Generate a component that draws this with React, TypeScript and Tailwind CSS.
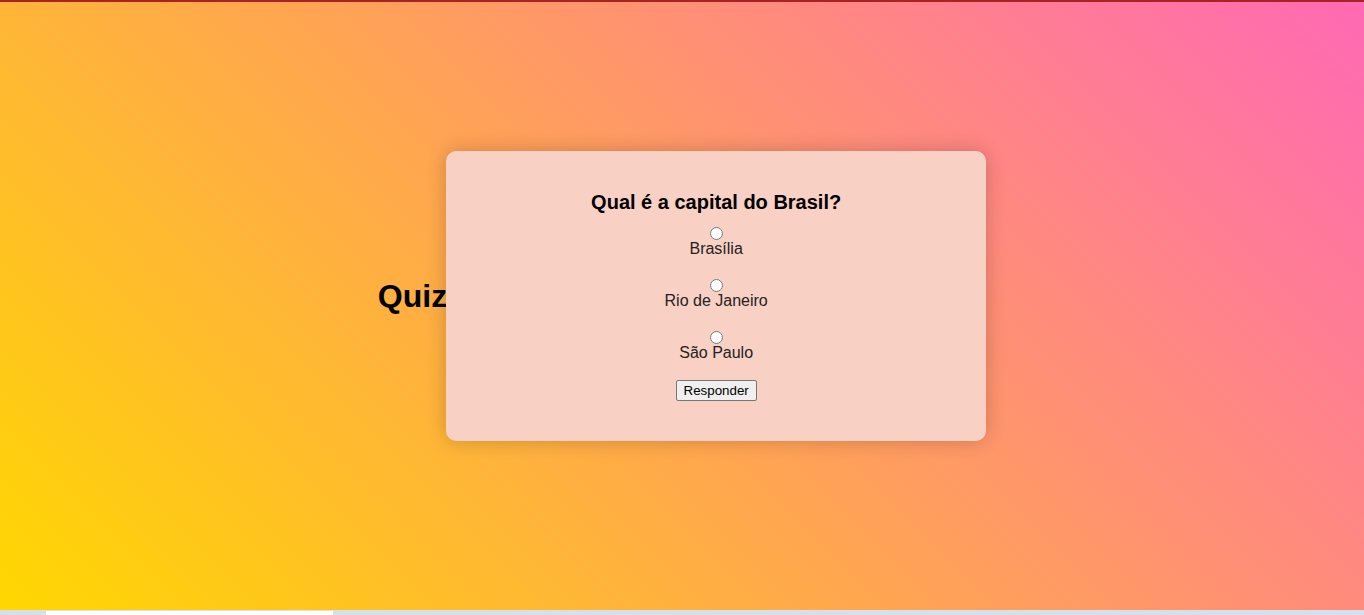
const options = ["Brasília", "Rio de Janeiro", "São Paulo"];

const QuizCard = () => {
  return (
    <div className="flex w-[540px] shrink-0 flex-col items-center rounded-[10px] bg-[#f9d0c4] p-5 text-center shadow-[0_0_20px_rgba(0,0,0,0.2)]">
      <h2 className="mt-[19px] text-[20px] leading-6 font-bold text-black">
        Qual é a capital do Brasil?
      </h2>
      <div className="mt-2.5 flex flex-col gap-[18px]">
        {options.map((option) => (
          <label key={option} className="flex flex-col items-center">
            <input
              type="radio"
              name="answer"
              value={option}
              className="mt-[3px] h-[13px] w-[13px]"
            />
            <span className="text-base leading-[18px] text-[#222]">{option}</span>
          </label>
        ))}
      </div>
      <button className="mt-[18px] mb-5 h-[21px] rounded-[2px] border border-[#767676] bg-[#efefef] px-[7px] text-[13.33px] leading-[17px] text-black">
        Responder
      </button>
    </div>
  );
};

const App = () => {
  return (
    <div className="flex h-screen flex-col font-['Liberation_Sans',Arial,sans-serif]">
      <main className="flex flex-1 items-center justify-center border-t-2 border-[#a82424] bg-[linear-gradient(45deg,#ffd700,#ff69b4)] pb-5">
        <h1 className="-mr-px text-[32px] leading-9 font-bold text-black">Quiz</h1>
        <QuizCard />
      </main>
      <div className="flex h-[5px] bg-[#d6e0ea] pt-px">
        <div className="ml-[46px] w-[287px] bg-white" />
      </div>
    </div>
  );
};

export default App;
